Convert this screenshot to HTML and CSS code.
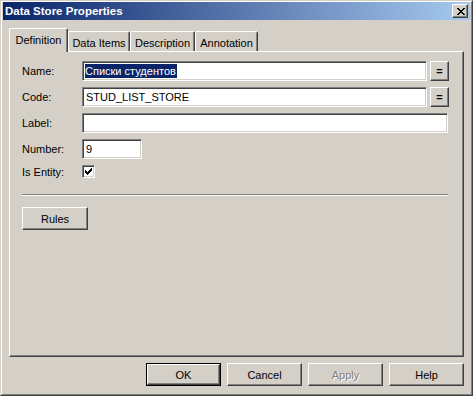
FILE: index.html
```html
<!DOCTYPE html>
<html>
<head>
<meta charset="utf-8">
<link rel="stylesheet" href="styles.css">
</head>
<body>
<div class="window">
  <div class="frame">
    <div class="caption">
      <span class="caption-title">Data Store Properties</span>
      <span class="close-btn">
        <svg width="8" height="7" viewBox="0 0 8 7" shape-rendering="crispEdges">
          <path d="M0 0h2v1H0zM6 0h2v1H6zM1 1h2v1H1zM5 1h2v1H5zM2 2h4v1H2zM3 3h2v1H3zM2 4h4v1H2zM1 5h2v1H1zM5 5h2v1H5zM0 6h2v1H0zM6 6h2v1H6z" fill="#000"/>
        </svg>
      </span>
    </div>
    <div class="body">
      <div class="tabs">
        <div class="tab tab-active tab-def">Definition</div>
        <div class="tab tab-items">Data Items</div>
        <div class="tab tab-desc">Description</div>
        <div class="tab tab-anno">Annotation</div>
      </div>
      <div class="panel">
        <div class="form">
          <label class="lbl">Name:</label>
          <div class="field-row field-eq">
            <div class="input input-grow"><span class="sel">Списки студентов</span></div>
            <span class="btn eq-btn">=</span>
          </div>
          <label class="lbl">Code:</label>
          <div class="field-row field-eq">
            <div class="input input-grow">STUD_LIST_STORE</div>
            <span class="btn eq-btn">=</span>
          </div>
          <label class="lbl">Label:</label>
          <div class="field-row">
            <div class="input input-grow"></div>
          </div>
          <label class="lbl">Number:</label>
          <div class="field-row">
            <div class="input input-num">9</div>
          </div>
          <label class="lbl lbl-check">Is Entity:</label>
          <div class="field-row field-check">
            <span class="checkbox">
              <svg width="7" height="7" viewBox="0 0 7 7" shape-rendering="crispEdges">
                <path d="M6 0h1v1H6zM5 1h2v1H5zM0 2h1v1H0zM4 2h3v1H4zM0 3h2v1H0zM3 3h3v1H3zM0 4h5v1H0zM1 5h3v1H1zM2 6h1v1H2z" fill="#000"/>
              </svg>
            </span>
          </div>
        </div>
        <div class="separator"></div>
        <span class="btn rules-btn">Rules</span>
      </div>
      <div class="buttons">
        <span class="btn dlg-btn btn-default"><span class="btn-inner">OK</span></span>
        <span class="btn dlg-btn">Cancel</span>
        <span class="btn dlg-btn btn-disabled">Apply</span>
        <span class="btn dlg-btn">Help</span>
      </div>
    </div>
  </div>
</div>
</body>
</html>
```
FILE: styles.css
```css
* { box-sizing: border-box; }
html, body { margin: 0; padding: 0; background: #D4D0C8; }
body {
  font-family: "Liberation Sans", Arial, sans-serif;
  font-size: 11px;
  color: #000;
}
.window {
  width: 473px;
  height: 396px;
  background: #D4D0C8;
  border-top: 1px solid #D4D0C8;
  border-left: 1px solid #D4D0C8;
  border-right: 1px solid #404040;
  border-bottom: 1px solid #404040;
}
.frame {
  height: 100%;
  border-top: 1px solid #fff;
  border-left: 1px solid #fff;
  border-right: 1px solid #808080;
  border-bottom: 1px solid #808080;
  padding: 0 1px;
}
.caption {
  height: 18px;
  background: linear-gradient(to right, #0A246A, #A6CAF0);
  display: flex;
  align-items: center;
  justify-content: space-between;
  padding: 0 2px 0 2px;
}
.caption-title {
  color: #fff;
  font-weight: bold;
  font-size: 11.5px;
}
.close-btn {
  width: 16px;
  height: 14px;
  background: #D4D0C8;
  border: 1px solid;
  border-color: #fff #404040 #404040 #fff;
  box-shadow: inset -1px -1px #808080;
  display: flex;
  align-items: center;
  justify-content: center;
  padding-left: 1px;
}
.close-btn svg { display: block; }
.body {
  padding: 8px 5px 0 6px;
}
.tabs {
  display: flex;
  align-items: flex-end;
  height: 23px;
  position: relative;
  z-index: 1;
}
.tab {
  height: 20px;
  border-top: 1px solid #fff;
  border-left: 1px solid #fff;
  border-right: 1px solid #404040;
  box-shadow: inset -1px 0 #808080;
  border-radius: 2px 2px 0 0;
  display: flex;
  align-items: center;
  justify-content: center;
  padding-top: 2px;
  white-space: nowrap;
}
.tab-def { width: 59px; }
.tab-items { width: 62px; }
.tab-desc { width: 65px; }
.tab-anno { width: 63px; }
.tab-active {
  height: 24px;
  margin-bottom: -1px;
  background: #D4D0C8;
  padding-top: 0;
  padding-bottom: 1px;
}
.panel {
  width: 455px;
  height: 306px;
  border-top: 1px solid #fff;
  border-left: 1px solid #fff;
  border-right: 1px solid #404040;
  border-bottom: 1px solid #404040;
  box-shadow: inset -1px -1px #808080;
  padding: 9px 0 0 12px;
}
.form {
  display: grid;
  grid-template-columns: 60px 366px;
  row-gap: 6px;
  align-items: center;
}
.lbl { white-space: nowrap; }
.field-row {
  display: flex;
  gap: 3px;
  height: 20px;
}
.field-eq { margin-right: -1px; }
.field-check { height: 13px; }
.input {
  height: 20px;
  background: #fff;
  border: 1px solid;
  border-color: #808080 #fff #fff #808080;
  box-shadow: inset 1px 1px #404040, inset -1px -1px #D4D0C8;
  padding: 0 0 0 3px;
  display: flex;
  align-items: center;
  white-space: nowrap;
  overflow: hidden;
}
.input-grow { flex: 1; }
.input-num { width: 60px; }
.sel {
  background: #0A246A;
  color: #fff;
  padding: 1px 1px 1px 0;
  margin-left: -1px;
  line-height: 12px;
}
.checkbox {
  width: 13px;
  height: 13px;
  background: #fff;
  border: 1px solid;
  border-color: #808080 #fff #fff #808080;
  box-shadow: inset 1px 1px #404040, inset -1px -1px #D4D0C8;
  display: flex;
  align-items: center;
  justify-content: center;
}
.checkbox svg { display: block; }
.btn {
  background: #D4D0C8;
  border: 1px solid;
  border-color: #fff #404040 #404040 #fff;
  box-shadow: inset -1px -1px #808080;
  display: flex;
  align-items: center;
  justify-content: center;
  white-space: nowrap;
}
.eq-btn {
  width: 19px;
  height: 20px;
  flex: none;
  font-weight: bold;
  font-size: 11px;
}
.separator {
  width: 426px;
  height: 2px;
  border-top: 1px solid #808080;
  border-bottom: 1px solid #fff;
  margin-top: 16px;
}
.rules-btn {
  width: 66px;
  height: 23px;
  margin-top: 11px;
}
.buttons {
  display: flex;
  justify-content: flex-end;
  gap: 6px;
  width: 455px;
  margin-top: 6px;
}
.dlg-btn {
  width: 75px;
  height: 23px;
}
.btn-default {
  border: 1px solid #000;
  box-shadow: none;
  padding: 0;
}
.btn-inner {
  width: 100%;
  height: 100%;
  border: 1px solid;
  border-color: #fff #404040 #404040 #fff;
  box-shadow: inset -1px -1px #808080;
  display: flex;
  align-items: center;
  justify-content: center;
}
.btn-disabled {
  color: #808080;
  text-shadow: 1px 1px 0 #fff;
}
```
